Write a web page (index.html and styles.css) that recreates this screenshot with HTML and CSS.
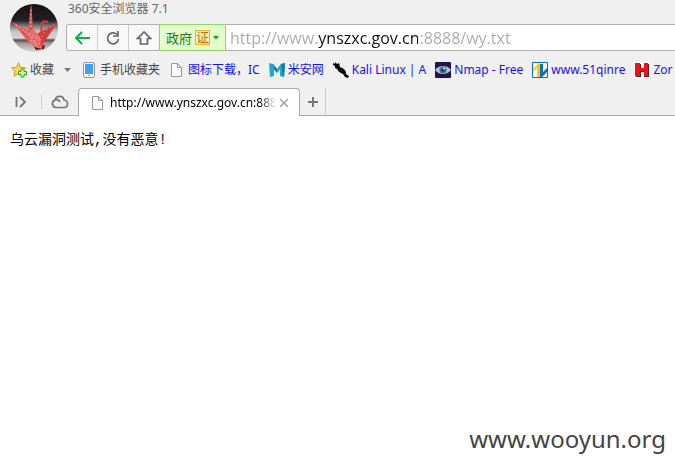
FILE: index.html
```html
<!DOCTYPE html>
<html lang="zh-CN">
<head>
<meta charset="utf-8">
<meta name="viewport" content="width=device-width, initial-scale=1">
<title>360安全浏览器 7.1</title>
<link rel="stylesheet" href="styles.css">
</head>
<body>
<header class="chrome">
  <div class="top">
    <svg class="avatar" viewBox="0 0 48 48" aria-hidden="true">
      <defs>
        <linearGradient id="sky" x1="0" y1="0" x2="0" y2="1">
          <stop offset="0" stop-color="#171214"/><stop offset=".34" stop-color="#222022"/>
          <stop offset=".45" stop-color="#777476"/><stop offset=".58" stop-color="#c9c8cb"/>
          <stop offset=".71" stop-color="#d8d3d4"/><stop offset=".75" stop-color="#5c4b4b"/>
          <stop offset=".82" stop-color="#a59a9b"/><stop offset="1" stop-color="#ddd6d6"/>
        </linearGradient>
        <clipPath id="disc"><circle cx="24" cy="24" r="24"/></clipPath>
      </defs>
      <g clip-path="url(#disc)">
        <path fill="url(#sky)" d="M0 0h48v48H0z"/>
        <path fill="#571a1c" d="M24 43l11-2-1 4-8 1z"/>
        <path fill="#e2504c" d="M20.500 2h1L23 27l-5 1z"/>
        <path fill="#e4605a" d="M2 18l16 8 6 9-4 5z"/>
        <path fill="#d23a3b" d="M48 18L36 25l-8 4-4 9 8 3z"/>
        <path fill="#e7716a" d="M18 26l6 0 8 9 0 10-8-2-4-4z"/>
        <path fill="none" stroke="#e2383a" stroke-width="2" d="M38 18l-4-1-2 2-1 12 1 12"/>
        <path fill="none" stroke="#ffd0c6" stroke-width="1" stroke-dasharray="1 3" d="M21 6v20M6 21l13 9 8 12M20 29l8 13M44 21l-9 6-5 10M22 32l8 3M21 37l9 3M12 25l10 8"/>
        <path fill="none" stroke="#b9242b" stroke-width="1" stroke-dasharray="1 2" d="M19 27l4 8 7 7M40 24l-8 9M13 28l8 9"/>
      </g>
    </svg>
    <div class="top-main">
      <div class="app-title">360安全浏览器 7.1</div>
      <div class="address">
        <button class="nav" type="button" aria-label="后退"><svg width="18" height="16" viewBox="0 0 18 16"><path d="M17 8H3M9 2L3 8l6 6" fill="none" stroke="#0cb04e" stroke-width="2"/></svg></button>
        <button class="nav" type="button" aria-label="刷新"><svg width="16" height="16" viewBox="0 0 16 16"><path d="M12 4.500A5.500 5.500 0 1 0 13.500 9M13 1v5H8" fill="none" stroke="#666" stroke-width="1.700"/></svg></button>
        <button class="nav" type="button" aria-label="主页"><svg width="16" height="16" viewBox="0 0 16 16"><path d="M8 2L1.500 8.500H4.500V14h7V8.500h3z" fill="none" stroke="#666" stroke-width="1.700"/></svg></button>
        <button class="cert" type="button"><span>政府</span><span class="seal">证</span><svg width="6" height="4" viewBox="0 0 6 4"><path d="M0 0h6L3 3.500z" fill="#159b1d"/></svg></button>
        <input class="url" type="text" aria-label="地址" value="http://www.ynszxc.gov.cn:8888/wy.txt" spellcheck="false">
      </div>
    </div>
  </div>

  <nav class="bookmarks" aria-label="收藏栏">
    <button class="mark plain" type="button">
      <svg class="icon" viewBox="0 0 16 16"><path d="M7.500 .800l2 4.500 5 .500-3.700 3.400 1 4.900-4.300-2.500-4.500 2.500 1.100-4.900L.600 5.800l4.900-.500z" fill="#ffd75a" stroke="#d99b25"/><path d="M10 7h3v2.500h2.500v3H13V15h-3v-2.500H7.500v-3H10z" fill="#caffb0" stroke="#25a51c"/></svg>
      <span>收藏</span>
      <svg class="caret" width="7" height="4" viewBox="0 0 7 4"><path d="M0 0h7L3.500 4z" fill="#777"/></svg>
    </button>
    <button class="mark plain" type="button">
      <svg class="icon" viewBox="0 0 16 16"><rect x="2.500" y=".500" width="11" height="15" rx="1.500" fill="#fff" stroke="#8b98a5"/><path fill="#459eee" d="M4 2h8v10H4z"/><path fill="#8b98a5" d="M7 13h2v1H7z"/></svg>
      <span>手机收藏夹</span>
    </button>
    <a class="mark" href="#"><svg class="icon" viewBox="0 0 16 16"><path d="M2.500 1.500h6l4 4v9h-10zM8.500 1.500v4h4" fill="#fafafa" stroke="#999"/></svg><span>图标下载，IC</span></a>
    <a class="mark" href="#"><svg class="icon" viewBox="0 0 16 16"><path fill="#23a6cf" d="M0 1l4 1 4 5 4-5 4-1-1 14-4-1V7l-3 4-3-4v7l-4 1z"/><path fill="#147ba5" d="M4 2l4 5v4L5 7zM12 2l4-1-1 14-1-1z"/></svg><span>米安网</span></a>
    <a class="mark" href="#"><svg class="icon" viewBox="0 0 16 16"><path fill="#080808" d="M0 1l2 1 0-2 2 2 2-1 1 4 4 2 2 3 0 2 3 2-1 2-3-1-2-3-4-2-2-3-2-1 0-2-2-1z"/></svg><span>Kali Linux | A</span></a>
    <a class="mark" href="#"><svg class="icon" viewBox="0 0 16 16"><rect width="16" height="16" rx="1" fill="#28104f"/><path fill="#9fc6da" d="M0 8q3-4 8-4t8 4q-3 4-8 4T0 8z"/><circle cx="8" cy="8" r="3.500" fill="#416f92"/><circle cx="8" cy="8" r="1.500" fill="#112b48"/><circle cx="9" cy="6.500" r="1" fill="#e7faff"/></svg><span>Nmap - Free</span></a>
    <a class="mark" href="#"><svg class="icon" viewBox="0 0 16 16"><path fill="#fff" stroke="#0870bd" d="M.500.500h15v15H.500z"/><path fill="#ffc90b" d="M1 7l6-6h1v14H5V6L1 10z"/><path fill="#0870bd" d="M8 2h3v8l4-4v4l-5 5H8z"/></svg><span>www.51qinre</span></a>
    <a class="mark" href="#"><svg class="icon" viewBox="0 0 16 16"><path fill="#fff" d="M0 0h16v16H0z"/><path fill="#562222" d="M2 2h5v4h3V2h5v13h-5v-5H7v5H2z"/><path fill="#ee1111" d="M1 1h5v5h4V1h4v13h-4V9H6v5H1z"/></svg><span>Zor</span></a>
  </nav>

  <div class="tabs">
    <div class="tab-tools">
      <button class="tool" type="button" aria-label="侧边栏"><svg width="12" height="12" viewBox="0 0 12 12"><path d="M1.500 1v10M5 1l5 5-5 5" fill="none" stroke="#777" stroke-width="1.800"/></svg></button>
      <button class="tool cloud" type="button" aria-label="云"><svg width="18" height="14" viewBox="0 0 18 14"><path d="M5 12.500a3.800 3.800 0 0 1-1-7.400C5 .500 12 0 13 5c5 .500 4.500 7.500 0 7.500zM4 5c2-1 4 0 5 2" fill="none" stroke="#777" stroke-width="1.700"/></svg></button>
    </div>
    <div class="tab">
      <svg class="icon" viewBox="0 0 16 16"><path d="M2.500 1.500h6l4 4v9h-10zM8.500 1.500v4h4" fill="#fafafa" stroke="#999"/></svg>
      <span class="tab-title">http://www.ynszxc.gov.cn:8888/wy.txt</span>
      <button class="close" type="button" aria-label="关闭标签页"><svg width="8" height="8" viewBox="0 0 8 8"><path d="M0 0l8 8M8 0L0 8" stroke="#999" stroke-width="1.300"/></svg></button>
    </div>
    <div class="tab-rest">
      <button class="add" type="button" aria-label="新建标签页"><svg width="10" height="10" viewBox="0 0 10 10"><path d="M5 0v10M0 5h10" stroke="#777" stroke-width="2"/></svg></button>
    </div>
  </div>
</header>
<main class="page">
  <pre class="text">乌云漏洞测试,没有恶意!</pre>
</main>
<footer class="watermark">www.wooyun.org</footer>
</body>
</html>
```
FILE: styles.css
```css
* {
  box-sizing: border-box;
}

body {
  margin: 0;
  min-height: 100vh;
  display: flex;
  flex-direction: column;
  overflow: hidden;
  background: #fff;
  color: #000;
  font: 12px/16px "Noto Sans", "Noto Sans CJK SC", sans-serif;
}

button {
  display: flex;
  align-items: center;
  justify-content: center;
  margin: 0;
  padding: 0;
  border: 0;
  background: none;
  color: inherit;
  font: inherit;
}

svg {
  display: block;
  flex: none;
}

.chrome {
  background: #f0f0f0;
}

.top {
  display: flex;
  gap: 8px;
  padding-left: 10px;
}

.avatar {
  width: 48px;
  height: 48px;
  margin-top: 4px;
}

.top-main {
  flex: 1;
  min-width: 0;
}

.app-title {
  padding: 1px 0 7px 2px;
  color: #666;
}

.address {
  display: flex;
  height: 27px;
  border: 1px solid #b0b0b0;
  border-right: 0;
  border-radius: 3px 0 0 3px;
  background: #fff;
}

.nav {
  width: 31px;
  border-right: 1px solid #ccc;
  background: #f8f8f8;
}

.nav:first-child {
  border-radius: 2px 0 0 2px;
}

.cert {
  gap: 3px;
  width: 67px;
  margin: -1px 0 -1px -1px;
  border: 1px solid #92d36e;
  background: #e2fccb;
  color: #26791b;
  font-size: 13px;
}

.seal {
  border: 1px solid #e5b52c;
  background: #fff0b5;
  color: #c67300;
  line-height: 13px;
}

.url {
  flex: 1;
  min-width: 0;
  padding: 0 4px;
  border: 0;
  outline: 0;
  background: linear-gradient(90deg, #aaa 91px, #111 91px, #111 192px, #aaa 192px);
  -webkit-background-clip: text;
  background-clip: text;
  color: transparent;
  font: 16px/20px "Open Sans", sans-serif;
}

.bookmarks {
  display: flex;
  gap: 9px;
  height: 36px;
  padding-left: 11px;
  overflow: hidden;
}

.mark {
  display: flex;
  flex: none;
  align-items: center;
  gap: 3px;
  color: #1414e6;
  text-decoration: none;
  white-space: nowrap;
}

.plain {
  color: #444;
}

.icon {
  width: 16px;
  height: 16px;
}

.caret {
  margin: 0 1px 0 7px;
}

.tabs {
  display: flex;
  height: 28px;
}

.tab-tools {
  display: flex;
  align-items: center;
  width: 78px;
  border-bottom: 1px solid #aaa;
}

.tool {
  width: 41px;
  height: 14px;
}

.cloud {
  width: 37px;
  padding-right: 1px;
  border-left: 1px solid #ccc;
}

.tab {
  display: flex;
  align-items: center;
  gap: 4px;
  width: 222px;
  padding: 0 11px;
  border: 1px solid #aaa;
  border-bottom: 0;
  border-radius: 4px 4px 0 0;
  background: #fff;
}

.tab-title {
  flex: 1;
  overflow: hidden;
  white-space: nowrap;
  -webkit-mask-image: linear-gradient(90deg, #000 90%, transparent);
  mask-image: linear-gradient(90deg, #000 90%, transparent);
}

.tab-rest {
  flex: 1;
  border-bottom: 1px solid #aaa;
}

.add {
  width: 26px;
  height: 27px;
  border-right: 1px solid #ccc;
}

.page {
  flex: 1;
  padding: 14px 10px;
}

.text {
  margin: 0;
  font: 14px/20px "Liberation Mono", "Noto Sans CJK SC", monospace;
}

.watermark {
  padding: 0 9px 12px;
  color: #444;
  font-size: 24px;
  line-height: 34px;
  text-align: right;
}
```
